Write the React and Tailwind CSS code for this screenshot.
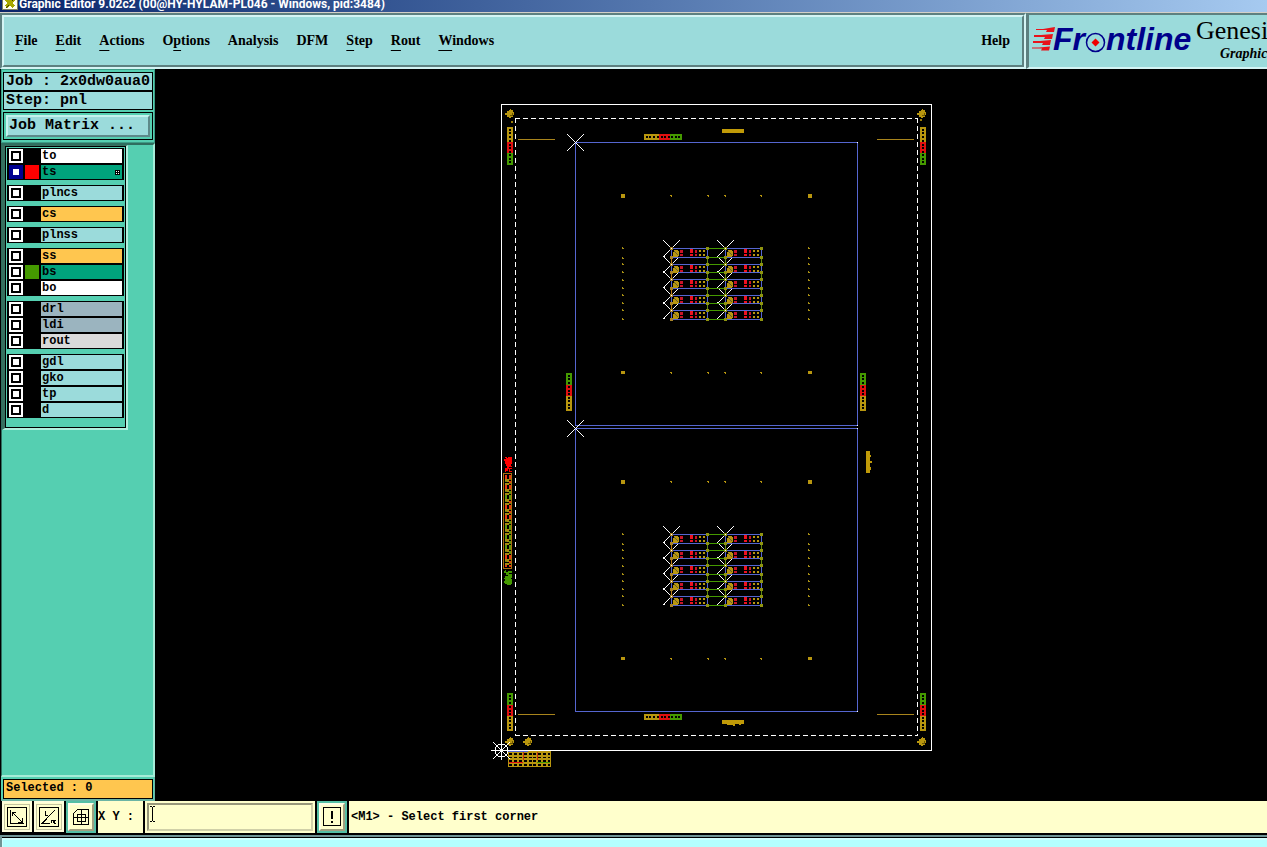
import React from "react";

const menus = [
  { label: "File", key: 0 },
  { label: "Edit", key: 0 },
  { label: "Actions", key: 0 },
  { label: "Options", key: 1 },
  { label: "Analysis", key: -1 },
  { label: "DFM", key: -1 },
  { label: "Step", key: 0 },
  { label: "Rout", key: 0 },
  { label: "Windows", key: 0 },
];

const layerGroups = [
  [
    { name: "to", color: "bg-white" },
    { name: "ts", color: "bg-[#00a37c]", swatch: "bg-[#ff0000]", active: true },
  ],
  [{ name: "plncs", color: "bg-[#9bdbdb]" }],
  [{ name: "cs", color: "bg-[#ffc64f]" }],
  [{ name: "plnss", color: "bg-[#9bdbdb]" }],
  [
    { name: "ss", color: "bg-[#ffc64f]" },
    { name: "bs", color: "bg-[#00a37c]", swatch: "bg-[#459a00]" },
    { name: "bo", color: "bg-white" },
  ],
  [
    { name: "drl", color: "bg-[#9bb4bf]" },
    { name: "ldi", color: "bg-[#9bb4bf]" },
    { name: "rout", color: "bg-[#dadada]" },
  ],
  [
    { name: "gdl", color: "bg-[#9bdbdb]" },
    { name: "gko", color: "bg-[#9bdbdb]" },
    { name: "tp", color: "bg-[#9bdbdb]" },
    { name: "d", color: "bg-[#9bdbdb]" },
  ],
];

const GOLD = "#b8960f";
const RED = "#e01010";
const GREEN = "#459a00";
const BLUE = "#5566d0";

const TitleBar = () => (
  <header className="flex h-[13px] shrink-0 items-end overflow-hidden border-b border-[#d4d0c8] bg-linear-to-r from-[#0a246a] to-[#a6caf0]">
    <svg className="ml-[2px] h-4 w-4 shrink-0 -translate-y-0.5" viewBox="0 0 16 16" shapeRendering="crispEdges">
      <rect width="16" height="16" fill="#808060" />
      <rect x="1" y="1" width="14" height="14" fill="#fffff0" />
      <path d="M4 5l8 8M12 5l-8 8" stroke="#a8a800" strokeWidth="3" />
      <path d="M4 14l3-3M10 7l2-2" stroke="#404000" />
    </svg>
    <h1 className="ml-px font-[Roboto,'Noto_Sans',sans-serif] text-[12px] leading-4 font-bold whitespace-nowrap text-white">
      Graphic Editor 9.02c2 (00@HY-HYLAM-PL046 - Windows, pid:3484)
    </h1>
  </header>
);

const MenuItem = ({ label, mnemonic }) => (
  <button type="button" className="leading-5">
    {label.slice(0, Math.max(mnemonic, 0))}
    {mnemonic >= 0 && (
      <span className="underline decoration-1 underline-offset-[5px]">{label[mnemonic]}</span>
    )}
    {label.slice(mnemonic + 1)}
  </button>
);

const Logo = () => (
  <svg className="h-9 w-[162px] shrink-0" viewBox="1031 24 162 36" role="img" aria-label="Frontline">
    <g fill="#e8131b">
      <path d="M1036 30h7l12-2-1 5h-8l1-2h-11z" />
      <path d="M1034 36h7l12-1-1 5h-8l1-2h-11z" />
      <path d="M1033 42h7l11-1-1 5h-8l1-2h-10z" />
      <path d="M1032 48.500h7l11-1-1 4h-8l1-2h-10z" />
    </g>
    <g
      fill="#00008b"
      fontFamily="'Liberation Sans', Arial, sans-serif"
      fontSize="32"
      fontWeight="700"
      fontStyle="italic"
    >
      <text x="1053" y="51">Fr</text>
      <text x="1106" y="51">ntline</text>
    </g>
    <circle cx="1095.500" cy="43.500" r="9" fill="#9bdbdb" stroke="#00008b" strokeWidth="1.500" />
    <path d="M1095.500 39.500l4 4-4 4-4-4z" fill="#f00000" />
  </svg>
);

const MenuBar = () => (
  <div className="flex h-14 shrink-0 overflow-hidden bg-[#9bdbdb] font-['Liberation_Serif','Times_New_Roman',serif] text-black">
    <nav className="flex min-w-0 flex-1 border-2 border-t-[#5d8080] border-r-[#d4f4f4] border-b-[#d4f4f4] border-l-[#5d8080]">
      <div className="flex flex-1 items-center gap-[18px] border-2 border-t-[#d4f4f4] border-r-[#5d8080] border-b-[#5d8080] border-l-[#d4f4f4] pr-3 pl-[11px] text-[14px] font-bold">
        {menus.map((menu) => (
          <MenuItem key={menu.label} label={menu.label} mnemonic={menu.key} />
        ))}
        <button type="button" className="ml-auto leading-5">
          Help
        </button>
      </div>
    </nav>
    <div className="flex w-[241px] shrink-0 items-center overflow-hidden border-t-2 border-b-2 border-l-3 border-t-[#5d8080] border-b-[#d4f4f4] border-l-[#5d8080] pl-[2px]">
      <Logo />
      <div className="ml-[3px] shrink-0 pb-px leading-none">
        <p className="text-[26px] leading-[26px]">Genesi</p>
        <p className="pl-6 text-[14px] leading-5 font-bold italic">Graphic</p>
      </div>
    </div>
  </div>
);

const LayerRow = ({ layer }) => (
  <div className="flex h-4 items-center gap-[2px] px-[2px]">
    <input
      id={`layer-${layer.name}`}
      type="checkbox"
      defaultChecked={layer.active}
      className="m-[2px] h-[10px] w-[10px] shrink-0 appearance-none border-2 border-black bg-white outline-2 outline-white checked:border-[#000090] checked:outline-[#000090]"
    />
    <span className={`h-[14px] w-[14px] shrink-0 ${layer.swatch || "bg-black"}`} />
    <label
      htmlFor={`layer-${layer.name}`}
      className={`flex h-[14px] flex-1 items-center justify-between pr-[2px] pl-px text-[12px] leading-[14px] font-bold ${layer.color}`}
    >
      {layer.name}
      {layer.active && (
        <svg className="h-[5px] w-[5px]" viewBox="0 0 5 5" shapeRendering="crispEdges">
          <rect width="5" height="5" fill="#000" />
          <path d="M1 1h1v1H1zM3 1h1v1H3zM1 3h1v1H1zM3 3h1v1H3z" fill="#fff" />
        </svg>
      )}
    </label>
  </div>
);

const Sidebar = () => (
  <aside className="ml-px flex w-[154px] shrink-0 flex-col bg-[#55cfb1] font-['Liberation_Mono','Courier_New',monospace] text-black">
    <div className="border border-[#3d9c86] px-px pt-[2px] pb-[2px] text-[15px]">
      <p className="h-[19px] border border-black bg-[#9bdbdb] pl-[2px] leading-[17px] font-bold whitespace-nowrap">
        Job : 2x0dw0aua0
      </p>
      <p className="h-[19px] border border-black bg-[#9bdbdb] pl-[2px] leading-[17px] font-bold whitespace-nowrap">
        Step: pnl
      </p>
      <div className="mt-[2px] border border-black p-[2px]">
        <button
          type="button"
          className="block h-[22px] w-full border-2 border-t-[#c4f2ee] border-r-[#5d8a8a] border-b-[#5d8a8a] border-l-[#c4f2ee] bg-[#9bdbdb] pl-px text-left leading-[18px] font-bold whitespace-nowrap"
        >
          Job Matrix ...
        </button>
      </div>
    </div>
    <div className="flex-1 border-t-2 border-r-2 border-b-2 border-l border-t-[#2f6e5f] border-r-[#a5ecd8] border-b-[#a5ecd8] border-l-[#2f6e5f]">
      <div className="w-[126px] border-t border-r-2 border-b-2 border-l-3 border-t-[#36705f] border-r-[#b0f0de] border-b-[#b0f0de] border-l-[#36705f]">
        <div className="flex flex-col gap-[5px] border border-black px-px pt-px pb-[9px]">
          {layerGroups.map((group, i) => (
            <div key={i} className="bg-black">
              {group.map((layer) => (
                <LayerRow key={layer.name} layer={layer} />
              ))}
            </div>
          ))}
        </div>
      </div>
    </div>
    <div className="border-r border-b-2 border-[#6bb5a5] pt-[2px] pr-px pl-[2px]">
      <p className="h-5 border border-black bg-[#ffc64f] pl-[2px] text-[12px] leading-[17px] font-bold">
        Selected : 0
      </p>
    </div>
  </aside>
);

const Cross = ({ x, y }) => (
  <path d={`M${x - 8} ${y - 8}l17 17M${x + 9} ${y - 8}l-17 17`} stroke="#fff" />
);

// colour bar of ten cells: gold, red, green
const Strip = ({ x, y, vertical, flip }) => {
  const parts = flip
    ? [[0, 12, GREEN], [12, 11, RED], [23, 15, GOLD]]
    : [[0, 15, GOLD], [15, 11, RED], [26, 12, GREEN]];
  return (
    <g>
      {parts.map(([at, len, color]) => (
        <rect
          key={at}
          x={vertical ? x : x + at}
          y={vertical ? y + at : y}
          width={vertical ? 6 : len}
          height={vertical ? len : 6}
          fill={color}
        />
      ))}
      {[2, 5, 9, 13, 17, 20, 24, 27, 31, 34].map((at) => (
        <rect
          key={at}
          x={vertical ? x + 2 : x + at}
          y={vertical ? y + at : y + 2}
          width="2"
          height="2"
          fill="#000"
        />
      ))}
    </g>
  );
};

const Fiducial = ({ x, y }) => (
  <g>
    <path
      d={`M${x} ${y - 4}h1v1h2v2h1v3h-1v2h-2v1h-2v-1h-2v-2h-2v-2h2v-2h2v-1h1z`}
      fill={GOLD}
    />
    <path d={`M${x} ${y + 2}h2v-2`} fill="none" stroke="#6b5600" />
  </g>
);

const Unit = ({ x, y, h }) => (
  <g>
    <rect x={x + 0.5} y={y + 0.5} width="36" height={h} fill="#000" stroke={BLUE} />
    <path d={`M${x + 3} ${y + 2}h4v1h1v5h-1v1h-5v-5h1z`} fill={GOLD} />
    <path d={`M${x + 3} ${y + 3}l4 4`} stroke="#5f5a30" />
    <path
      d={`M${x + 9} ${y + 2}h3v3h-3zM${x + 9} ${y + 6}h3v2h-3zM${x + 24} ${y + 2}h2v3h-2zM${x + 24} ${y + 6}h2v2h-2z`}
      fill="#c81428"
    />
    <path d={`M${x + 19} ${y + 1}h3v4h-3zM${x + 19} ${y + 6}h3v2h-3z`} fill="#f01020" />
    <path
      d={`M${x + 28} ${y + 2}h2v2h-2zM${x + 32} ${y + 2}h2v2h-2zM${x + 28} ${y + 6}h2v2h-2zM${x + 32} ${y + 6}h2v2h-2z`}
      fill={GOLD}
    />
  </g>
);

const unitRows = [[248, 9], [264, 8], [279, 9], [295, 8], [310, 9]];

const Board = () => (
  <g>
    <rect x="575.500" y="142.500" width="282" height="283" fill="none" stroke={BLUE} />
    <path d="M857 142h1v1h-1zM857 425h1v1h-1z" fill="#fff" />
    <Cross x={575} y={142} />
    {[194, 371].map((y) => (
      <g key={y} fill={GOLD}>
        <rect x="621" y={y} width="4" height={y === 194 ? 4 : 3} />
        <rect x="808" y={y} width="4" height={y === 194 ? 4 : 3} />
        {[670, 707, 724, 760].map((x) => (
          <path key={x} d={`M${x} ${y + 1}h2v2h-1v-1h-1z`} />
        ))}
      </g>
    ))}
    {[247, 257, 263, 271, 279, 287, 294, 302, 309, 318].map((y) => (
      <path key={y} d={`M622 ${y}h1v1h1v1h-2zM808 ${y}h1v1h1v1h-2z`} fill="#a89014" />
    ))}
    {unitRows.map(([y]) => (
      <g key={y}>
        <Cross x={671} y={y} />
        <Cross x={725} y={y} />
      </g>
    ))}
    <path d="M671.500 249v71" stroke="#b87a10" />
    <path d="M707.500 249v71M725.500 249v71M761.500 249v71" stroke="#5f8a10" />
    {unitRows.map(([y, h]) => (
      <g key={y}>
        <path d={`M708 ${y + 0.5}h18M708 ${y + h + 0.5}h18`} stroke={GREEN} />
        <Unit x={671} y={y} h={h} />
        <Unit x={725} y={y} h={h} />
        {[670, 706, 724, 760].map((x) => (
          <path
            key={x}
            d={`M${x} ${y - 1}h3v3h-3zM${x} ${y + h - 1}h3v3h-3z`}
            fill={x === 670 ? "#a88428" : "#8f9410"}
          />
        ))}
        <path d={`M664 ${y + 8}h1v1h-1zM671 ${y}h1v1h-1zM725 ${y}h1v1h-1z`} fill="#fff" />
      </g>
    ))}
  </g>
);

// dense coupon text running up the left edge of the panel
const CouponText = () => {
  const cells = [];
  for (let i = 0; i < 46; i++) {
    const warm = i < 8 || (i > 11 && i < 23) || i > 38;
    for (let j = 0; j < 3; j++) {
      const n = (i * 7 + j * 11 + i * i * 3) % 10;
      if (n === 1) continue;
      let color = "#a88a10";
      if (n < 6) color = warm ? "#e83a10" : "#5f9a08";
      if (n === 8) color = "#6a8a08";
      cells.push(
        <rect
          key={`${i}-${j}`}
          x={505 + j * 2}
          y={475 + i * 2}
          width="2"
          height={n > 7 ? 1 : 2}
          fill={color}
        />
      );
    }
  }
  return (
    <g>
      <path d="M505 457h2v1h1v-1h4v7h-1v2h1v1h-3v1h3v1h-2v2h2v1h-3v-3h-1v2h-2v1h-1v-4h2v-2h-1v-2h-1v-3h-1v-2h2z" fill="#ff0000" />
      <rect x="503.500" y="473.500" width="8" height="95" fill="none" stroke="#a87010" />
      {cells}
      <path d="M505 570h1v2h2v-1h4v2h-3v1h3v4h-1v1h1v5h-1v1h-4v-1h-2v-1h-1v-2h1v-2h-1v-1h1v-2h3v-1h-2v-2h-2z" fill="#459a00" />
    </g>
  );
};

const PanelView = () => (
  <main className="min-w-0 flex-1 bg-black">
    <svg
      className="block h-full w-full"
      viewBox="155 69 1112 732"
      preserveAspectRatio="xMinYMin meet"
      shapeRendering="crispEdges"
    >
      <rect x="501.500" y="104.500" width="430" height="646" fill="none" stroke="#fff" />
      <path d="M515 118.500h403M515 735.500h403M515.500 118v617M917.500 118v617" stroke="#fff" strokeDasharray="5 3" />

      <Board />
      <g transform="translate(0 286)">
        <Board />
      </g>

      <path d="M518 139.500h37M877 139.500h37M518 714.500h37M877 714.500h37" stroke="#a8841c" />
      <Strip x={507} y={127} vertical />
      <Strip x={920} y={127} vertical />
      <Strip x={507} y={693} vertical flip />
      <Strip x={920} y={693} vertical flip />
      <Strip x={566} y={373} vertical flip />
      <Strip x={860} y={373} vertical flip />
      <Strip x={644} y={134} />
      <Strip x={644} y={714} />

      <g fill="#c09a08">
        <rect x="722" y="129" width="22" height="4" />
        <path d="M722 720h22v4h-3v1h-2v-1h-4v2h-2v-1h-6v-1h-5z" />
        <path d="M866 451h4v4h1v2h-1v4h2v2h-2v4h1v3h-1v3h-4z" />
        <path d="M511 121h2v2h-2zM920 119h2v2h-2z" fillOpacity="0.8" />
      </g>
      <Fiducial x={510} y={113} />
      <Fiducial x={922} y={113} />
      <Fiducial x={510} y={741} />
      <Fiducial x={528} y={741} />
      <Fiducial x={922} y={741} />
      <CouponText />

      {/* stackup table under the origin */}
      <rect x="508" y="751" width="43" height="16" fill={GOLD} />
      {[753, 757, 760, 764].map((y) =>
        [0, 1, 2, 3, 4, 5, 6, 7, 8].map((i) => (
          <rect key={`${y}-${i}`} x={509 + i * 5 - (i > 4 ? 1 : 0)} y={y} width={i === 8 ? 2 : 3} height={y === 757 ? 1 : 2} fill="#000" />
        ))
      )}
      <path d="M509 762.500h14" stroke="#e01010" />
      <path d="M537 762.500h13" stroke={GREEN} />
      <path d="M508 751.500h20" stroke={BLUE} />
      <path d="M523.500 752v8M537.500 752v8" stroke="#c83010" />

      <g fill="none" stroke="#fff">
        <circle cx="501.500" cy="750.500" r="6.500" />
        <path d="M491 750.500h19M501.500 740v20M493 742l17 17M510 742l-17 17" />
      </g>
    </svg>
  </main>
);

const ToolButton = ({ label, active, children }) => (
  <button
    type="button"
    aria-label={label}
    className={
      active
        ? "flex h-8 w-[30px] shrink-0 items-center justify-center border-3 border-[#55bfa5] bg-[#ffffcc]"
        : "flex h-[31px] w-[30px] shrink-0 items-center justify-center border-2 border-[#ffffdd] bg-[#ffffcc]"
    }
  >
    <span
      className={
        active
          ? "border-2 border-t-[#ffffe6] border-r-[#a0a080] border-b-[#a0a080] border-l-[#ffffe6] px-px py-[2px]"
          : "border border-[#c4c4a0] p-[2px]"
      }
    >
      <svg className="block h-5 w-5" viewBox="0 0 20 20" fill="none" stroke="#000" shapeRendering="crispEdges">
        {children}
      </svg>
    </span>
  </button>
);

const StatusBar = () => (
  <footer className="shrink-0 bg-black font-['Liberation_Mono','Courier_New',monospace] text-[12px] font-bold text-black">
    <div className="flex h-8 gap-[2px] pl-[2px]">
      <ToolButton label="Zoom to window">
        <rect x="0.500" y="0.500" width="19" height="19" />
        <path d="M3.500 3v13.500H17M5.500 9V5.500H9M6 6l9 9M15.500 11v4.500H11" />
      </ToolButton>
      <ToolButton label="Measure angle">
        <rect x="0.500" y="0.500" width="19" height="19" />
        <path d="M16 3L3 16.500h8M6 4v4h3M12 16v-3h2v3M17 13h-1.500v3H17" />
      </ToolButton>
      <ToolButton label="Grid" active>
        <path d="M2.500 6.500l4-4h11v15h-15zM6 7.500h8.500v6.500H6zM10.500 2v15M2 10.500h15" />
      </ToolButton>
      <label htmlFor="xy" className="w-[45px] shrink-0 bg-[#ffffcc] leading-8 whitespace-nowrap">
        X Y :
      </label>
      <div className="relative w-[170px] shrink-0 bg-[#ffffcc] p-[2px]">
        <input
          id="xy"
          type="text"
          className="block h-7 w-full border-2 border-t-[#97977a] border-r-[#d0d0a8] border-b-[#d0d0a8] border-l-[#97977a] bg-[#ffffcc] px-[2px] outline-none"
        />
        {/* mouse pointer resting over the field */}
        <svg
          className="pointer-events-none absolute top-[5px] left-[5px] h-4 w-[5px]"
          viewBox="0 0 5 16"
          fill="none"
          stroke="#000"
          shapeRendering="crispEdges"
        >
          <path d="M0 0.500h2M3 0.500h2M2.500 1v14M0 15.500h2M3 15.500h2" />
        </svg>
      </div>
      <ToolButton label="Warnings" active>
        <rect x="1.500" y="0.500" width="17" height="18" />
        <path d="M10 4v8M10 14v2" strokeWidth="2" />
      </ToolButton>
      <p className="min-w-0 flex-1 bg-[#ffffcc] pl-[2px] leading-8 whitespace-nowrap">
        &lt;M1&gt; - Select first corner
      </p>
    </div>
    <div className="mt-[2px] h-3 border-t-2 border-l-2 border-[#6f9494]">
      <div className="mt-px h-full border-t-2 border-l border-[#d0ffff] bg-[#b4ffff]" />
    </div>
  </footer>
);

const App = () => (
  <div className="flex h-screen flex-col overflow-hidden bg-black">
    <TitleBar />
    <MenuBar />
    <div className="flex min-h-0 flex-1">
      <Sidebar />
      <PanelView />
    </div>
    <StatusBar />
  </div>
);

export default App;
